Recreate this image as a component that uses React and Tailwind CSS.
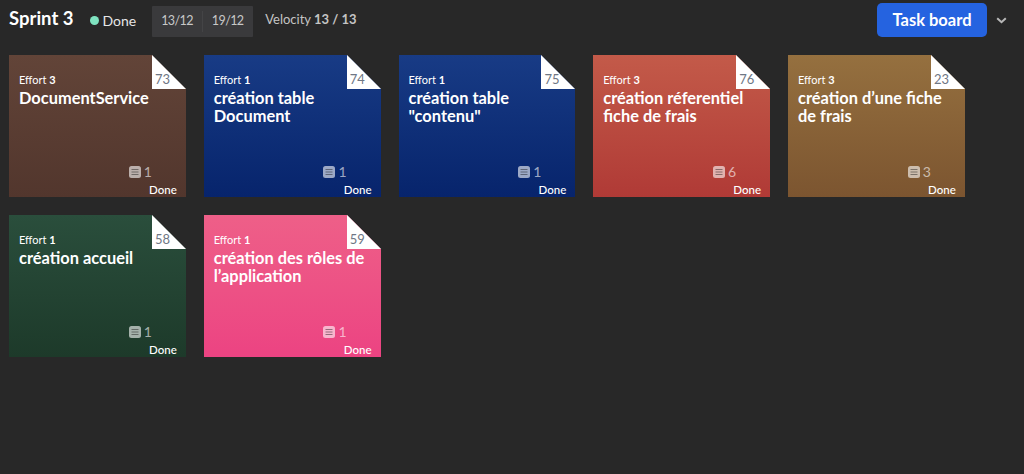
const font = { fontFamily: 'Lato, "Noto Sans", sans-serif' };

const cards = [
  { id: 73, effort: 3, title: 'DocumentService', tasks: 1, bg: 'bg-gradient-to-b from-[#624438] to-[#52362d]' },
  { id: 74, effort: 1, title: 'création table Document', tasks: 1, bg: 'bg-gradient-to-b from-[#183b85] to-[#07246c]' },
  { id: 75, effort: 1, title: 'création table "contenu"', tasks: 1, bg: 'bg-gradient-to-b from-[#183b85] to-[#07246c]' },
  { id: 76, effort: 3, title: 'création réferentiel fiche de frais', tasks: 6, bg: 'bg-gradient-to-b from-[#c35a49] to-[#b03a36]' },
  { id: 23, effort: 3, title: 'création d’une fiche de frais', tasks: 3, bg: 'bg-gradient-to-b from-[#95703f] to-[#7c5530]' },
  { id: 58, effort: 1, title: 'création accueil', tasks: 1, bg: 'bg-gradient-to-b from-[#2a4e3c] to-[#1d3a2a]' },
  { id: 59, effort: 1, title: 'création des rôles de l’application', tasks: 1, bg: 'bg-gradient-to-b from-[#ee5f88] to-[#ec4382]' },
];

function Card({ card }) {
  return (
    <div className={`relative h-[142px] w-[176.75px] pl-[10px] pr-[12px] pt-[18px] text-white ${card.bg}`}>
      {/* folded corner */}
      <svg className="absolute right-0 top-0" width="34" height="34" viewBox="0 0 34 34">
        <polygon points="0,0 34,0 34,34" fill="#282828" />
        <polygon points="0,0 34,34 0,34" fill="#ffffff" />
      </svg>
      <span className="absolute left-[146px] top-[16px] text-[13px] leading-[17px] text-[#6f7785]">{card.id}</span>
      <div className="text-[11px] leading-[13px]">
        Effort <span className="font-bold">{card.effort}</span>
      </div>
      <div className="mt-[3px] text-[16.4px] font-bold leading-[18px]">{card.title}</div>
      <div className="absolute bottom-[17px] right-[34px] flex items-center gap-[3px] text-[14px] leading-[16px] text-white/60">
        <svg width="12" height="12" viewBox="0 0 12 12">
          <rect width="12" height="12" rx="2.5" fill="currentColor" />
          <path d="M2.5 3.5h7M2.5 6h7M2.5 8.5h7" stroke="#000" strokeOpacity="0.4" strokeWidth="1.1" />
        </svg>
        {card.tasks}
      </div>
      <div className="absolute bottom-[1px] right-[9px] text-[11.5px] font-medium leading-[13px]">Done</div>
    </div>
  );
}

export default function App() {
  return (
    <div className="h-[474px] overflow-hidden bg-[#282828] pl-[9px] pr-[17px]" style={font}>
      <header className="flex h-[55px] items-start pt-[3px]">
        <div className="flex h-[34px] items-center">
          <h1 className="-mt-[2px] text-[18.5px] font-bold text-white">Sprint 3</h1>
          <span className="ml-[16px] h-[9px] w-[9px] rounded-full bg-[#7fe3c0]" />
          <span className="ml-[4px] text-[14px] text-[#e6e6e6]">Done</span>
          <div className="ml-[16px] mt-[3px] flex h-[31px] w-[101px] items-center rounded-[1px] bg-[#3a3a3c] pl-[9px] text-[12.5px] tracking-[-0.6px] text-[#c8c8c8]">
            <span>13/12</span>
            <span className="mx-[9px] h-[21px] w-px bg-[#444446]" />
            <span>19/12</span>
          </div>
          <span className="ml-[12px] text-[13px] text-[#c4c4c4]">
            Velocity <span className="font-bold">13 / 13</span>
          </span>
        </div>
        <button className="ml-auto h-[34px] w-[110px] rounded-[5px] bg-[#2563e0] text-[16.5px] font-bold text-white">
          Task board
        </button>
        <svg className="ml-[9px] mt-[14px]" width="11" height="7" viewBox="0 0 11 7" fill="none">
          <path d="M1.2 1.2 5.5 5.2l4.3-4" stroke="#b8b8b8" strokeWidth="2" />
        </svg>
      </header>
      <div className="flex flex-wrap gap-[18px]">
        {cards.map((card) => (
          <Card key={card.id} card={card} />
        ))}
      </div>
    </div>
  );
}
